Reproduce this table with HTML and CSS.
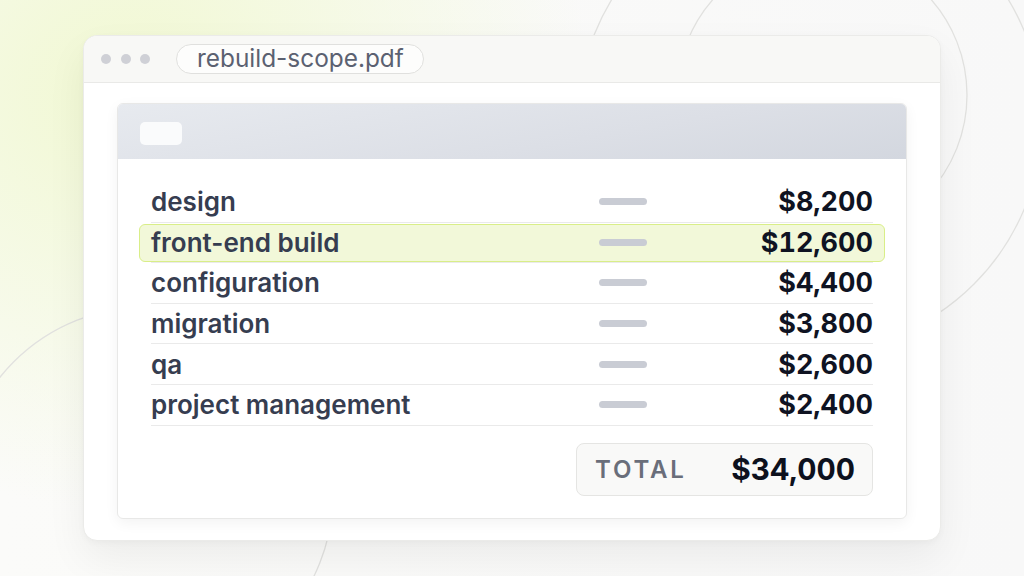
FILE: index.html
```html
<!DOCTYPE html>
<html lang="en">
<head>
    <meta charset="UTF-8">
    <meta name="viewport" content="width=device-width, initial-scale=1.0">
    <title>rebuild-scope.pdf</title>
    <link rel="stylesheet" href="styles.css">
</head>
<body>
    <svg class="rings" width="1024" height="576" viewBox="0 0 1024 576">
        <circle cx="810" cy="120" r="232" />
        <circle cx="822" cy="95" r="145" />
        <circle cx="146" cy="494" r="187" />
    </svg>

    <div class="window">
        <div class="titlebar">
            <div class="dots">
                <span></span><span></span><span></span>
            </div>
            <div class="tab">rebuild-scope.pdf</div>
        </div>

        <div class="viewer">
            <div class="doc">
                <div class="doc-head">
                    <div class="logo-box"></div>
                </div>

                <div class="doc-body">
                    <div class="rows">
                        <div class="row">
                            <div class="line">
                                <span class="label">design</span>
                                <span class="bar"></span>
                                <span class="amount">$8,200</span>
                            </div>
                        </div>
                        <div class="row">
                            <div class="line highlight">
                                <span class="label">front-end build</span>
                                <span class="bar"></span>
                                <span class="amount">$12,600</span>
                            </div>
                        </div>
                        <div class="row">
                            <div class="line">
                                <span class="label">configuration</span>
                                <span class="bar"></span>
                                <span class="amount">$4,400</span>
                            </div>
                        </div>
                        <div class="row">
                            <div class="line">
                                <span class="label">migration</span>
                                <span class="bar"></span>
                                <span class="amount">$3,800</span>
                            </div>
                        </div>
                        <div class="row">
                            <div class="line">
                                <span class="label">qa</span>
                                <span class="bar"></span>
                                <span class="amount">$2,600</span>
                            </div>
                        </div>
                        <div class="row">
                            <div class="line">
                                <span class="label">project management</span>
                                <span class="bar"></span>
                                <span class="amount">$2,400</span>
                            </div>
                        </div>
                    </div>

                    <div class="total-wrap">
                        <div class="total">
                            <span class="total-label">TOTAL</span>
                            <span class="total-amount">$34,000</span>
                        </div>
                    </div>
                </div>
            </div>
        </div>
    </div>
</body>
</html>
```

FILE: styles.css
```css
* {
    margin: 0;
    padding: 0;
    box-sizing: border-box;
    font-family: 'Inter', 'Noto Sans', sans-serif;
}

body {
    width: 1024px;
    height: 576px;
    overflow: hidden;
    position: relative;
    display: flex;
    align-items: center;
    justify-content: center;
    background:
        radial-gradient(ellipse 460px 420px at 130px 90px, #f1f8d2 0%, rgba(243, 249, 220, 0.8) 40%, rgba(250, 250, 250, 0) 100%),
        linear-gradient(to right, #fbfbf9, #f8f8f8);
}

/* decorative rings behind the window */
.rings {
    position: absolute;
    top: 0;
    left: 0;
    z-index: 0;
}

.rings circle {
    fill: none;
    stroke: #e1e1df;
    stroke-width: 1.3;
}

.window {
    position: relative;
    z-index: 1;
    width: 858px;
    height: 506px;
    background: #ffffff;
    border: 1px solid #ebebe9;
    border-radius: 14px;
    overflow: hidden;
    box-shadow: 0 18px 40px rgba(0, 0, 0, 0.06), 0 2px 6px rgba(0, 0, 0, 0.03);
    display: flex;
    flex-direction: column;
}

.titlebar {
    height: 47px;
    flex-shrink: 0;
    background: #f8f8f6;
    border-bottom: 1px solid #e9e9e7;
    display: flex;
    align-items: center;
    padding-left: 17px;
    gap: 26px;
}

.dots {
    display: flex;
    gap: 9.5px;
}

.dots span {
    width: 10px;
    height: 10px;
    border-radius: 50%;
    background: #cfd0d6;
}

.tab {
    height: 30px;
    width: 248px;
    border: 1px solid #e0e0de;
    border-radius: 15px;
    background: #fdfdfc;
    font-size: 24.4px;
    color: #5b6171;
    line-height: 27px;
    padding-left: 20px;
}

.viewer {
    flex: 1;
    padding: 20px 33px 21px;
}

.doc {
    height: 100%;
    border: 1px solid #e8e8e7;
    border-radius: 6px;
    overflow: hidden;
    background: #ffffff;
    box-shadow: 0 4px 14px rgba(0, 0, 0, 0.05);
}

.doc-head {
    height: 55px;
    background: linear-gradient(170deg, #e7eaef 0%, #dcdfe6 60%, #d3d7df 100%);
    padding: 18px 0 0 22px;
}

.logo-box {
    width: 42px;
    height: 23px;
    border-radius: 5px;
    background: #fafbfc;
}

.doc-body {
    padding: 23px 33px 0;
}

.row {
    height: 40.6px;
    border-bottom: 1px solid #eaeaea;
    display: flex;
}

.line {
    flex: 1;
    display: grid;
    grid-template-columns: 1fr 48px 226px;
    align-items: center;
}

.line.highlight {
    margin: 1px -12px 0;
    padding: 0 11px;
    background: #f2f8d9;
    border: 1.5px solid #d9ee88;
    border-radius: 6px;
}

.label {
    font-size: 26px;
    font-weight: 600;
    color: #363d50;
}

.bar {
    height: 7px;
    border-radius: 4px;
    background: #c9ccd4;
}

.amount {
    text-align: right;
    font-size: 27px;
    font-weight: 700;
    color: #0f1322;
    font-variant-numeric: tabular-nums;
}

.total-wrap {
    display: flex;
    justify-content: flex-end;
    padding-top: 17px;
}

.total {
    width: 297px;
    height: 53px;
    border: 1px solid #e5e5e3;
    border-radius: 8px;
    background: #f9f9f8;
    display: flex;
    align-items: center;
    justify-content: space-between;
    padding: 0 17px 0 18px;
}

.total-label {
    font-size: 24px;
    font-weight: 600;
    letter-spacing: 2.8px;
    color: #6a6e7a;
}

.total-amount {
    font-size: 29.8px;
    font-weight: 700;
    color: #0d111d;
    font-variant-numeric: tabular-nums;
}
```
